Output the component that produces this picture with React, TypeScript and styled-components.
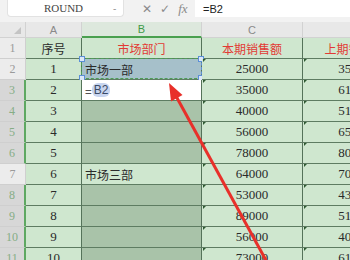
import React from 'react';
import styled, { createGlobalStyle, css } from 'styled-components';

const GlobalStyle = createGlobalStyle`
  html, body {
    margin: 0;
    padding: 0;
    background: #f2f2f2;
  }
`;

const Window = styled.div`
  position: relative;
  width: 350px;
  height: 260px;
  overflow: hidden;
  background: #f2f2f2;
  font-family: 'Liberation Sans', Arial, sans-serif;
`;

const FormulaBar = styled.div`
  display: flex;
  align-items: stretch;
  height: 17px;
`;

const NameBox = styled.div`
  display: flex;
  align-items: center;
  margin-left: 7px;
  width: 117px;
  box-sizing: border-box;
  background: #fff;
  border: 1px solid #e2e2e2;
  border-top: none;
  border-radius: 0 0 4px 4px;
`;

const NameText = styled.span`
  flex: 1;
  text-align: center;
  font-family: 'Liberation Serif', serif;
  font-size: 11px;
  color: #444;
  padding-left: 6px;
`;

const Caret = styled.span`
  width: 10px;
  font-size: 10px;
  color: #999;
`;

const Tools = styled.div`
  display: flex;
  align-items: center;
  gap: 8px;
  padding-left: 18px;
  width: 71px;
  box-sizing: border-box;
`;

const ToolIcon = styled.span<{ $italic?: boolean }>`
  font-family: ${p => (p.$italic ? "'Liberation Serif', serif" : "'DejaVu Sans', sans-serif")};
  font-style: ${p => (p.$italic ? 'italic' : 'normal')};
  font-size: ${p => (p.$italic ? '13px' : '12px')};
  color: #8a8a8a;
`;

const FormulaInput = styled.div`
  flex: 1;
  display: flex;
  align-items: center;
  padding-left: 8px;
  background: #fff;
  font-size: 11px;
  color: #222;
`;

const Spacer = styled.div`
  height: 5px;
`;

const Sheet = styled.div`
  display: grid;
  grid-template-columns: 26px 56px 120px 101px 104px;
  grid-template-rows: 16px;
  grid-auto-rows: 21px;
  width: max-content;
`;

const Corner = styled.div`
  position: relative;
  background: #e8e8e8;
  border-right: 1px solid #d2d2d2;
  border-bottom: 1px solid #d2d2d2;
  box-sizing: border-box;
  &::after {
    content: '';
    position: absolute;
    right: 4px;
    bottom: 3px;
    border-left: 7px solid transparent;
    border-bottom: 7px solid #c4c4c4;
  }
`;

const ColHeader = styled.div<{ $active?: boolean }>`
  display: flex;
  align-items: center;
  justify-content: center;
  box-sizing: border-box;
  font-size: 11px;
  background: ${p => (p.$active ? '#dde8dd' : '#e8e8e8')};
  color: ${p => (p.$active ? '#3d9a46' : '#8a8a8a')};
  border-right: 1px solid #d2d2d2;
  border-bottom: ${p => (p.$active ? '2px solid #4aa04f' : '1px solid #d2d2d2')};
`;

const RowHeader = styled.div<{ $active?: boolean }>`
  display: flex;
  align-items: center;
  justify-content: center;
  box-sizing: border-box;
  font-family: 'Liberation Serif', serif;
  font-size: 12px;
  background: ${p => (p.$active ? '#d7d7d7' : '#ececec')};
  color: ${p => (p.$active ? '#86ad86' : '#9a9a9a')};
  border-bottom: 1px solid #cfcfcf;
  border-right: ${p => (p.$active ? '2px solid #5ea862' : '1px solid #cfcfcf')};
`;

type Tone = 'green' | 'sel' | 'src' | 'edit';

const toneBg: Record<Tone, string> = {
  green: '#cfe7cf',
  sel: '#a9c3a9',
  src: '#a6c0ca',
  edit: '#ffffff',
};

const Cell = styled.div<{ $tone: Tone; $left?: boolean; $red?: boolean; $num?: boolean; $flag?: boolean }>`
  position: relative;
  display: flex;
  align-items: center;
  justify-content: ${p => (p.$left ? 'flex-start' : 'center')};
  padding-left: ${p => (p.$left ? '3px' : '0')};
  box-sizing: border-box;
  white-space: nowrap;
  overflow: visible;
  background: ${p => toneBg[p.$tone]};
  border-right: 1px solid #55735a;
  border-bottom: 1px solid #5e7c62;
  color: ${p => (p.$red ? '#e23a34' : '#2a2a2a')};
  font-family: ${p =>
    p.$num ? "'Liberation Serif', serif" : "'Noto Sans CJK SC', 'Liberation Sans', sans-serif"};
  font-size: ${p => (p.$num ? '13px' : '12px')};
  ${p =>
    p.$flag &&
    css`
      &::before {
        content: '';
        position: absolute;
        left: 1px;
        top: 0;
        border-top: 3px solid #2f5a33;
        border-right: 3px solid transparent;
      }
    `}
`;

const Marquee = styled.div`
  position: absolute;
  inset: -1px -1px 0 -1px;
  border: 1.5px dashed #4f9e58;
  border-right-color: #5d8fd6;
  pointer-events: none;
`;

const Handle = styled.span<{ $x: 'left' | 'right'; $y: 'top' | 'bottom' }>`
  position: absolute;
  ${p => p.$x}: -3px;
  ${p => p.$y}: -3px;
  width: 4px;
  height: 4px;
  background: #dbe7f7;
  border: 1px solid #5b8fd8;
`;

const Ref = styled.span`
  padding: 0 2px;
  border-radius: 6px;
  background: #c8d5ef;
  color: #3a4a66;
  font-family: 'Liberation Sans', Arial, sans-serif;
  font-size: 12px;
`;

const Arrow = styled.svg`
  position: absolute;
  left: 0;
  top: 0;
  pointer-events: none;
`;

type Row = { a: string; b?: string; c: string; d: string; bTone: Tone; active: boolean };

const rows: Row[] = [
  { a: '1', b: '市场一部', c: '25000', d: '35000', bTone: 'src', active: false },
  { a: '2', c: '35000', d: '61000', bTone: 'edit', active: true },
  { a: '3', c: '40000', d: '51000', bTone: 'sel', active: true },
  { a: '4', c: '56000', d: '65000', bTone: 'sel', active: true },
  { a: '5', c: '78000', d: '80000', bTone: 'sel', active: true },
  { a: '6', b: '市场三部', c: '64000', d: '70000', bTone: 'green', active: false },
  { a: '7', c: '53000', d: '43000', bTone: 'sel', active: true },
  { a: '8', c: '89000', d: '51000', bTone: 'sel', active: true },
  { a: '9', c: '56000', d: '40000', bTone: 'sel', active: true },
  { a: '10', c: '73000', d: '61000', bTone: 'sel', active: true },
];

export default function App() {
  return (
    <Window>
      <GlobalStyle />
      <FormulaBar>
        <NameBox>
          <NameText>ROUND</NameText>
          <Caret>-</Caret>
        </NameBox>
        <Tools>
          <ToolIcon>✕</ToolIcon>
          <ToolIcon>✓</ToolIcon>
          <ToolIcon $italic>fx</ToolIcon>
        </Tools>
        <FormulaInput>=B2</FormulaInput>
      </FormulaBar>
      <Spacer />
      <Sheet>
        <Corner />
        <ColHeader>A</ColHeader>
        <ColHeader $active>B</ColHeader>
        <ColHeader>C</ColHeader>
        <ColHeader>D</ColHeader>

        <RowHeader>1</RowHeader>
        <Cell $tone="green">序号</Cell>
        <Cell $tone="green" $red>市场部门</Cell>
        <Cell $tone="green" $red>本期销售额</Cell>
        <Cell $tone="green" $red>上期销售额</Cell>

        {rows.map((r, i) => (
          <React.Fragment key={i}>
            <RowHeader $active={r.active}>{i + 2}</RowHeader>
            <Cell $tone="green" $num>{r.a}</Cell>
            <Cell $tone={r.bTone} $left>
              {r.b}
              {r.bTone === 'edit' && (
                <>
                  =<Ref>B2</Ref>
                </>
              )}
              {r.bTone === 'src' && (
                <Marquee>
                  <Handle $x="left" $y="top" />
                  <Handle $x="left" $y="bottom" />
                  <Handle $x="right" $y="top" />
                  <Handle $x="right" $y="bottom" />
                </Marquee>
              )}
            </Cell>
            <Cell $tone="green" $num $flag>{r.c}</Cell>
            <Cell $tone="green" $num $flag>{r.d}</Cell>
          </React.Fragment>
        ))}
      </Sheet>
      <Arrow width="350" height="260" viewBox="0 0 350 260">
        <line x1="268" y1="264" x2="176.5" y2="97" stroke="#e8302a" strokeWidth="3" />
        <polygon points="169,83 182.5,95 171,101.5" fill="#e8302a" />
      </Arrow>
    </Window>
  );
}
